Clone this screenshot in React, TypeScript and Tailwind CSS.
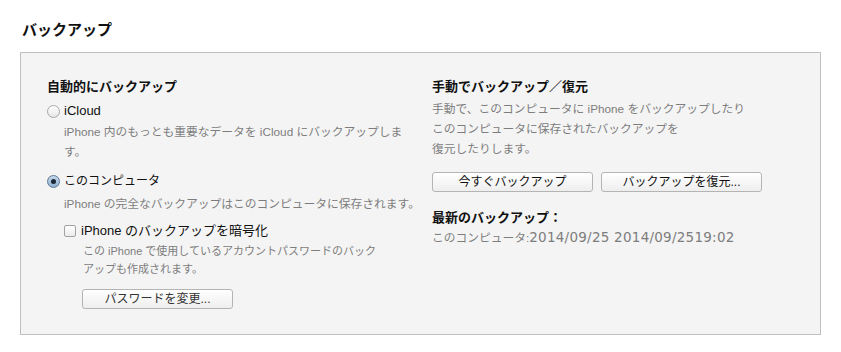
const font = "font-['Liberation_Sans','Noto_Sans_CJK_JP',sans-serif]";

function Radio({ checked }: { checked?: boolean }) {
  if (checked) {
    return (
      <span className="flex h-[13px] w-[13px] shrink-0 items-center justify-center rounded-full border border-[#5d7894] bg-gradient-to-b from-[#c6d8ea] to-[#8fb0d2]">
        <span className="h-[5px] w-[5px] rounded-full bg-[#1c2736]" />
      </span>
    );
  }
  return (
    <span className="h-[13px] w-[13px] shrink-0 rounded-full border border-[#a8a8a8] bg-gradient-to-b from-white to-[#e6e6e6]" />
  );
}

function Button({ children, className = "" }: { children: React.ReactNode; className?: string }) {
  return (
    <button
      type="button"
      className={`flex h-[20px] items-center justify-center rounded-[3px] border border-[#b4b4b4] bg-gradient-to-b from-white to-[#eeeeee] text-[12px] leading-none text-[#111] ${className}`}
    >
      {children}
    </button>
  );
}

export default function App() {
  return (
    <main className={`min-h-[352px] w-[841px] bg-white px-5 pt-[20px] ${font}`}>
      <h1 className="pl-[2px] text-[15px] font-bold leading-[20px] text-[#111]">バックアップ</h1>

      <section className="mt-[12px] grid h-[283px] grid-cols-[385px_1fr] border border-[#bfbfbf] bg-[#f4f4f4] pl-[26px] pt-[24px]">
        <div className="flex flex-col">
          <h2 className="text-[13px] font-bold leading-[20px] text-[#111]">自動的にバックアップ</h2>

          <label className="mt-[4px] flex h-[20px] items-center gap-[4px] text-[13px] text-[#111]">
            <Radio />
            iCloud
          </label>
          <p className="mt-[1px] whitespace-nowrap pl-[17px] text-[11.75px] leading-[20px] text-[#7d7d7d]">
            iPhone 内のもっとも重要なデータを iCloud にバックアップしま
            <br />
            す。
          </p>

          <label className="mt-[9px] flex h-[20px] items-center gap-[4px] text-[12px] text-[#111]">
            <Radio checked />
            このコンピュータ
          </label>
          <p className="mt-[3px] whitespace-nowrap pl-[17px] text-[11.75px] leading-[20px] text-[#7d7d7d]">
            iPhone の完全なバックアップはこのコンピュータに保存されます。
          </p>

          <label className="mt-[7px] flex h-[20px] items-center gap-[5px] pl-[17px] text-[13px] text-[#111]">
            <span className="h-[12px] w-[12px] shrink-0 rounded-[2px] border border-[#a3a3a3] bg-gradient-to-b from-white to-[#ececec]" />
            iPhone のバックアップを暗号化
          </label>
          <p className="mt-[1px] whitespace-nowrap pl-[36px] text-[11px] leading-[18px] text-[#7d7d7d]">
            この iPhone で使用しているアカウントパスワードのバック
            <br />
            アップも作成されます。
          </p>

          <div className="mt-[11px] pl-[35px]">
            <Button className="w-[151px] text-[#333]">パスワードを変更...</Button>
          </div>
        </div>

        <div className="flex flex-col">
          <h2 className="text-[13px] font-bold leading-[20px] text-[#111]">手動でバックアップ／復元</h2>
          <p className="mt-[2px] whitespace-nowrap text-[11.75px] leading-[20px] text-[#7d7d7d]">
            手動で、このコンピュータに iPhone をバックアップしたり
            <br />
            このコンピュータに保存されたバックアップを
            <br />
            復元したりします。
          </p>

          <div className="mt-[13px] flex gap-[8px]">
            <Button className="w-[161px]">今すぐバックアップ</Button>
            <Button className="w-[161px]">バックアップを復元...</Button>
          </div>

          <h3 className="mt-[16px] text-[13px] font-bold leading-[20px] text-[#111]">最新のバックアップ：</h3>
          <p className="h-[20px] whitespace-nowrap text-[11.75px] leading-[20px] text-[#7d7d7d]">
            このコンピュータ:
            <span className="font-['DejaVu_Sans',sans-serif] text-[13.5px] leading-none tracking-[0.25px]">
              2014/09/25 2014/09/2519:02
            </span>
          </p>
        </div>
      </section>
    </main>
  );
}
